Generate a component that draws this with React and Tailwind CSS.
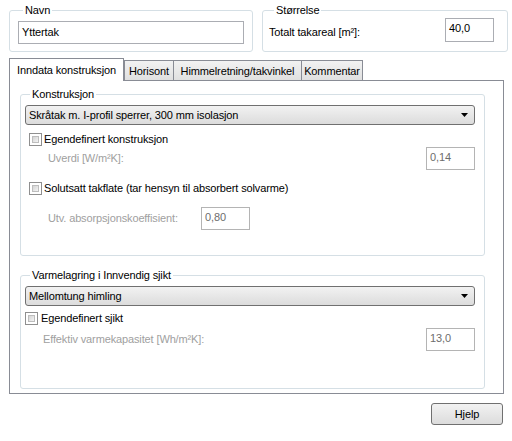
import React from 'react'

function Checkbox() {
  return (
    <span className="w-[13px] h-[13px] border border-[#8f8f8f] bg-white p-[2px] shrink-0">
      <span className="block w-full h-full bg-gradient-to-br from-[#d4d4d4] to-[#f4f4f4] border border-[#bdbdbd]" />
    </span>
  )
}

function Combo({ value }) {
  return (
    <div className="h-[20px] border border-[#707070] rounded-[3px] bg-gradient-to-b from-[#f2f2f2] to-[#dcdcdc] flex items-center pl-[3px] pr-[6px] text-black">
      <span className="flex-1">{value}</span>
      <svg width="7" height="4" viewBox="0 0 7 4">
        <path d="M0 0h7L3.5 4z" fill="#000" />
      </svg>
    </div>
  )
}

function Field({ value, disabled, className = '' }) {
  return (
    <div
      className={`border bg-white px-[3px] pt-[2px] leading-[15px] ${
        disabled ? 'border-[#b4b4b4] text-[#6d6d6d]' : 'border-[#abadb3] text-black'
      } ${className}`}
    >
      {value}
    </div>
  )
}

function Group({ title, className = '', children }) {
  return (
    <fieldset className={`border border-[#d5dfe5] rounded-[3px] ${className}`}>
      <legend className="ml-[5px] px-[2px] leading-[13px] text-black">{title}</legend>
      {children}
    </fieldset>
  )
}

function Tab({ label, active, width }) {
  if (active) {
    return (
      <div className={`h-[23px] ${width} text-center pt-[3px] border border-b-0 border-[#898c95] bg-white relative z-10 -mb-px`}>
        {label}
      </div>
    )
  }
  return (
    <div className={`h-[20px] ${width} text-center mt-[2px] pt-[2px] border border-b-0 border-[#898c95] bg-gradient-to-b from-[#f2f2f2] to-[#e0e0e0] -ml-px first:ml-0`}>
      {label}
    </div>
  )
}

export default function App() {
  return (
    <div
      className="w-[512px] h-[441px] bg-white text-[11px] tracking-[-0.13px] text-black overflow-hidden"
      style={{ fontFamily: 'Tahoma, "Liberation Sans", Arial, sans-serif' }}
    >
      <div className="flex pt-[4px] pl-[9px] gap-[9px]">
        <Group title="Navn" className="w-[244px] h-[48px] px-[8px]">
          <Field value="Yttertak" className="h-[23px] mt-[4px] pt-[3px]" />
        </Group>
        <Group title="Størrelse" className="w-[246px] h-[48px] px-[6px]">
          <div className="flex items-center">
            <span className="flex-1 pt-[6px]">Totalt takareal [m²]:</span>
            <Field value="40,0" className="w-[49px] h-[24px] mt-[1px] mr-[7px]" />
          </div>
        </Group>
      </div>

      <div className="ml-[9px] mt-[6px] w-[495px]">
        <div className="flex items-end">
          <Tab label="Inndata konstruksjon" active width="w-[115px]" />
          <div className="flex">
            <Tab label="Horisont" width="w-[50px]" />
            <Tab label="Himmelretning/takvinkel" width="w-[129px]" />
            <Tab label="Kommentar" width="w-[62px]" />
          </div>
        </div>
        <div className="h-[314px] border border-[#898c95] bg-white pl-[10px] pt-[7px]">
          <Group title="Konstruksjon" className="w-[465px] h-[168px] pl-[4px] pr-[9px]">
            <div className="mt-[4px]">
              <Combo value="Skråtak m. I-profil sperrer, 300 mm isolasjon" />
            </div>
            <div className="flex items-center gap-[2px] mt-[8px] ml-[4px]">
              <Checkbox />
              <span className="leading-[13px]">Egendefinert konstruksjon</span>
            </div>
            <div className="flex items-center mt-[1px] ml-[23px]">
              <span className="flex-1 text-[#a0a0a0]">Uverdi [W/m²K]:</span>
              <Field value="0,14" disabled className="w-[49px] h-[23px]" />
            </div>
            <div className="flex items-center gap-[2px] mt-[12px] ml-[4px]">
              <Checkbox />
              <span className="leading-[13px]">Solutsatt takflate (tar hensyn til absorbert solvarme)</span>
            </div>
            <div className="flex items-center mt-[12px] ml-[23px]">
              <span className="w-[153px] text-[#a0a0a0]">Utv. absorpsjonskoeffisient:</span>
              <Field value="0,80" disabled className="w-[49px] h-[23px]" />
            </div>
          </Group>

          <Group title="Varmelagring i Innvendig sjikt" className="w-[465px] h-[120px] mt-[13px] pl-[4px] pr-[9px]">
            <div className="mt-[4px]">
              <Combo value="Mellomtung himling" />
            </div>
            <div className="flex items-center gap-[3px] mt-[6px]">
              <Checkbox />
              <span className="leading-[13px]">Egendefinert sjikt</span>
            </div>
            <div className="flex items-center mt-[3px] ml-[18px]">
              <span className="flex-1 text-[#a0a0a0]">Effektiv varmekapasitet [Wh/m²K]:</span>
              <Field value="13,0" disabled className="w-[49px] h-[23px]" />
            </div>
          </Group>
        </div>
      </div>

      <div className="flex justify-end pr-[9px] mt-[9px]">
        <button className="w-[72px] h-[22px] border border-[#707070] rounded-[3px] bg-gradient-to-b from-[#f2f2f2] to-[#dcdcdc] text-[11px]">
          Hjelp
        </button>
      </div>
    </div>
  )
}
